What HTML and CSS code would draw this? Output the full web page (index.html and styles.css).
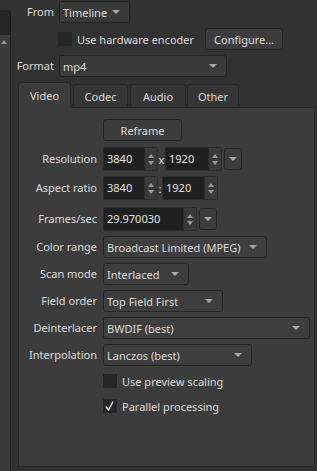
FILE: index.html
```html
<!DOCTYPE html>
<html>
<head>
<meta charset="utf-8">
<link rel="stylesheet" href="styles.css">
</head>
<body>
<div class="app">
  <div class="side">
    <div class="side-gap"></div>
    <div class="side-dark"></div>
    <div class="side-btn"><i class="tri-up"></i></div>
    <div class="side-rest"></div>
  </div>
  <div class="main">
    <div class="top-form">
      <label class="lbl">From</label>
      <div class="combo top w-from"><span>Timeline</span><i class="arrow"></i></div>
      <span></span>
      <div class="hw-row">
        <span class="check"></span><span class="check-text">Use hardware encoder</span>
        <div class="btn configure">Configure...</div>
      </div>
      <label class="lbl">Format</label>
      <div class="combo top w-format"><span>mp4</span><i class="arrow"></i></div>
    </div>

    <div class="tabs">
      <div class="tab active t-video">Video</div>
      <div class="tab t-codec">Codec</div>
      <div class="tab t-audio">Audio</div>
      <div class="tab t-other">Other</div>
    </div>

    <div class="panel">
      <div class="form">
        <span></span>
        <div class="btn reframe">Reframe</div>

        <label class="lbl">Resolution</label>
        <div class="field-row">
          <div class="spin w-res1"><span class="val">3840</span><span class="spin-btns"><i class="tri-up"></i><i class="tri-down"></i></span></div>
          <span class="sep">x</span>
          <div class="spin w-res2"><span class="val">1920</span><span class="spin-btns"><i class="tri-up"></i><i class="tri-down"></i></span></div>
          <div class="drop-btn"><i class="arrow"></i></div>
        </div>

        <label class="lbl">Aspect ratio</label>
        <div class="field-row">
          <div class="spin w-res1"><span class="val">3840</span><span class="spin-btns"><i class="tri-up"></i><i class="tri-down"></i></span></div>
          <span class="sep colon">:</span>
          <div class="spin w-asp2"><span class="val">1920</span><span class="spin-btns"><i class="tri-up"></i><i class="tri-down"></i></span></div>
        </div>

        <label class="lbl fps-lbl">Frames/sec</label>
        <div class="field-row fps-row">
          <div class="spin w-fps"><span class="val">29.970030</span><span class="spin-btns"><i class="tri-up"></i><i class="tri-down"></i></span></div>
          <div class="drop-btn"><i class="arrow"></i></div>
        </div>

        <label class="lbl">Color range</label>
        <div class="combo w-color"><span>Broadcast Limited (MPEG)</span><i class="arrow"></i></div>

        <label class="lbl">Scan mode</label>
        <div class="combo w-scan"><span>Interlaced</span><i class="arrow"></i></div>

        <label class="lbl">Field order</label>
        <div class="combo w-field"><span>Top Field First</span><i class="arrow"></i></div>

        <label class="lbl">Deinterlacer</label>
        <div class="combo w-deint"><span>BWDIF (best)</span><i class="arrow"></i></div>

        <label class="lbl">Interpolation</label>
        <div class="combo w-interp"><span>Lanczos (best)</span><i class="arrow"></i></div>

        <span></span>
        <div class="check-row"><span class="check"></span><span class="check-text">Use preview scaling</span></div>

        <span></span>
        <div class="check-row"><span class="check checked"><svg width="14" height="14" viewBox="0 0 14 14"><polyline points="3,7.5 5.5,11 10,2.5" fill="none" stroke="#dcdcdc" stroke-width="1.5"/></svg></span><span class="check-text">Parallel processing</span></div>
      </div>
    </div>
  </div>
</div>
</body>
</html>
```
FILE: styles.css
```css
* { box-sizing: border-box; }
html, body {
  margin: 0;
  padding: 0;
  background: #323232;
  width: 317px;
  height: 471px;
  overflow: hidden;
}
body {
  font-family: "Noto Sans", "Open Sans", sans-serif;
  font-size: 11px;
  color: #dcdcdc;
}
.app {
  display: flex;
  height: 471px;
}
.side {
  width: 11px;
  display: flex;
  flex-direction: column;
}
.side-gap { height: 10px; }
.side-dark {
  height: 25px;
  background: #262626;
  border-top-right-radius: 3px;
  border-right: 1px solid #1e1e1e;
}
.side-btn {
  height: 13px;
  background: #3e3e3e;
  border-right: 1px solid #222;
  display: flex;
  align-items: center;
  justify-content: center;
  padding-right: 2px;
}
.side-rest {
  flex: 1;
  background: #383838;
  border-right: 1px solid #252525;
}
.main {
  flex: 1;
  display: flex;
  flex-direction: column;
}

/* top form */
.top-form {
  display: grid;
  grid-template-columns: 43px auto;
  grid-auto-rows: 22px;
  column-gap: 5px;
  row-gap: 5px;
  padding-top: 1px;
  align-items: center;
}
.lbl {
  text-align: right;
  white-space: nowrap;
  line-height: 22px;
}
.hw-row {
  display: flex;
  align-items: center;
  margin-left: -1px;
}
.hw-row .check-text { margin-left: 5px; }
.configure {
  margin-left: 11px;
  width: 78px;
}

.combo {
  height: 22px;
  display: flex;
  align-items: center;
  justify-content: space-between;
  padding: 0 9px 0 3px;
  background: #3e3e3e;
  border: 1px solid #262626;
  border-radius: 3px;
  white-space: nowrap;
}
.combo.top { background: #3a3a3a; border-color: #232323; }
.w-from { width: 71px; }
.w-format { width: 168px; }
.arrow {
  display: inline-block;
  width: 0; height: 0;
  border-left: 4px solid transparent;
  border-right: 4px solid transparent;
  border-top: 4px solid #a8a8a8;
}
.tri-up, .tri-down {
  display: block;
  width: 0; height: 0;
  border-left: 3.5px solid transparent;
  border-right: 3.5px solid transparent;
}
.tri-up { border-bottom: 4px solid #9a9a9a; }
.tri-down { border-top: 4px solid #9a9a9a; }

.btn {
  height: 22px;
  display: flex;
  align-items: center;
  justify-content: center;
  background: #3c3c3c;
  border: 1px solid #232323;
  border-radius: 3px;
  white-space: nowrap;
}

.check {
  width: 14px;
  height: 14px;
  background: #262626;
  flex: none;
  display: flex;
}

/* tabs */
.tabs {
  display: flex;
  align-items: flex-end;
  margin-left: 7px;
  margin-top: 5px;
  height: 25px;
}
.tab {
  height: 23px;
  display: flex;
  align-items: center;
  justify-content: center;
  background: #353535;
  border: 1px solid #282828;
  border-bottom: none;
  border-radius: 3px 3px 0 0;
  margin-right: 2px;
}
.tab.active {
  height: 26px;
  background: #3c3c3c;
  margin-bottom: -1px;
  position: relative;
  z-index: 1;
}
.t-video { width: 53px; }
.t-codec { width: 55px; }
.t-audio { width: 56px; margin-right: 1px; }
.t-other { width: 52px; }

.panel {
  margin-left: 7px;
  margin-right: 2px;
  height: 360px;
  background: #3c3c3c;
  border: 1px solid #282828;
}
.form {
  display: grid;
  grid-template-columns: 78px auto;
  column-gap: 6px;
  row-gap: 5px;
  padding-top: 11px;
  align-items: center;
  justify-items: start;
}
.form .lbl { justify-self: end; }
.reframe { width: 79px; margin-bottom: 1px; }

.field-row {
  display: flex;
  align-items: center;
}
.fps-row, .fps-lbl { margin-top: 2px; }
.spin {
  height: 24px;
  display: flex;
  background: #1f1f1f;
  border: 1px solid #2c2c2c;
  border-radius: 2px;
}
.spin .val {
  flex: 1;
  padding-left: 3px;
  line-height: 22px;
  color: #e4e4e4;
}
.spin-btns {
  width: 13px;
  background: #3a3a3a;
  border-left: 1px solid #2c2c2c;
  display: flex;
  flex-direction: column;
  align-items: center;
  justify-content: center;
  gap: 3px;
}
.w-res1 { width: 55px; }
.w-res2 { width: 57px; }
.w-asp2 { width: 56px; }
.w-fps { width: 94px; }
.sep {
  width: 7px;
  text-align: center;
  font-size: 11px;
}
.sep.colon { width: 4px; }
.drop-btn {
  width: 18px;
  height: 22px;
  margin-left: 2px;
  display: flex;
  align-items: center;
  justify-content: center;
  background: #3c3c3c;
  border: 1px solid #262626;
  border-radius: 3px;
}

.w-color { width: 164px; }
.w-scan { width: 86px; }
.w-field { width: 120px; }
.w-deint { width: 207px; }
.w-interp { width: 149px; }

.check-row {
  display: flex;
  align-items: center;
  height: 20px;
}
.check-row .check-text { margin-left: 5px; }
```
